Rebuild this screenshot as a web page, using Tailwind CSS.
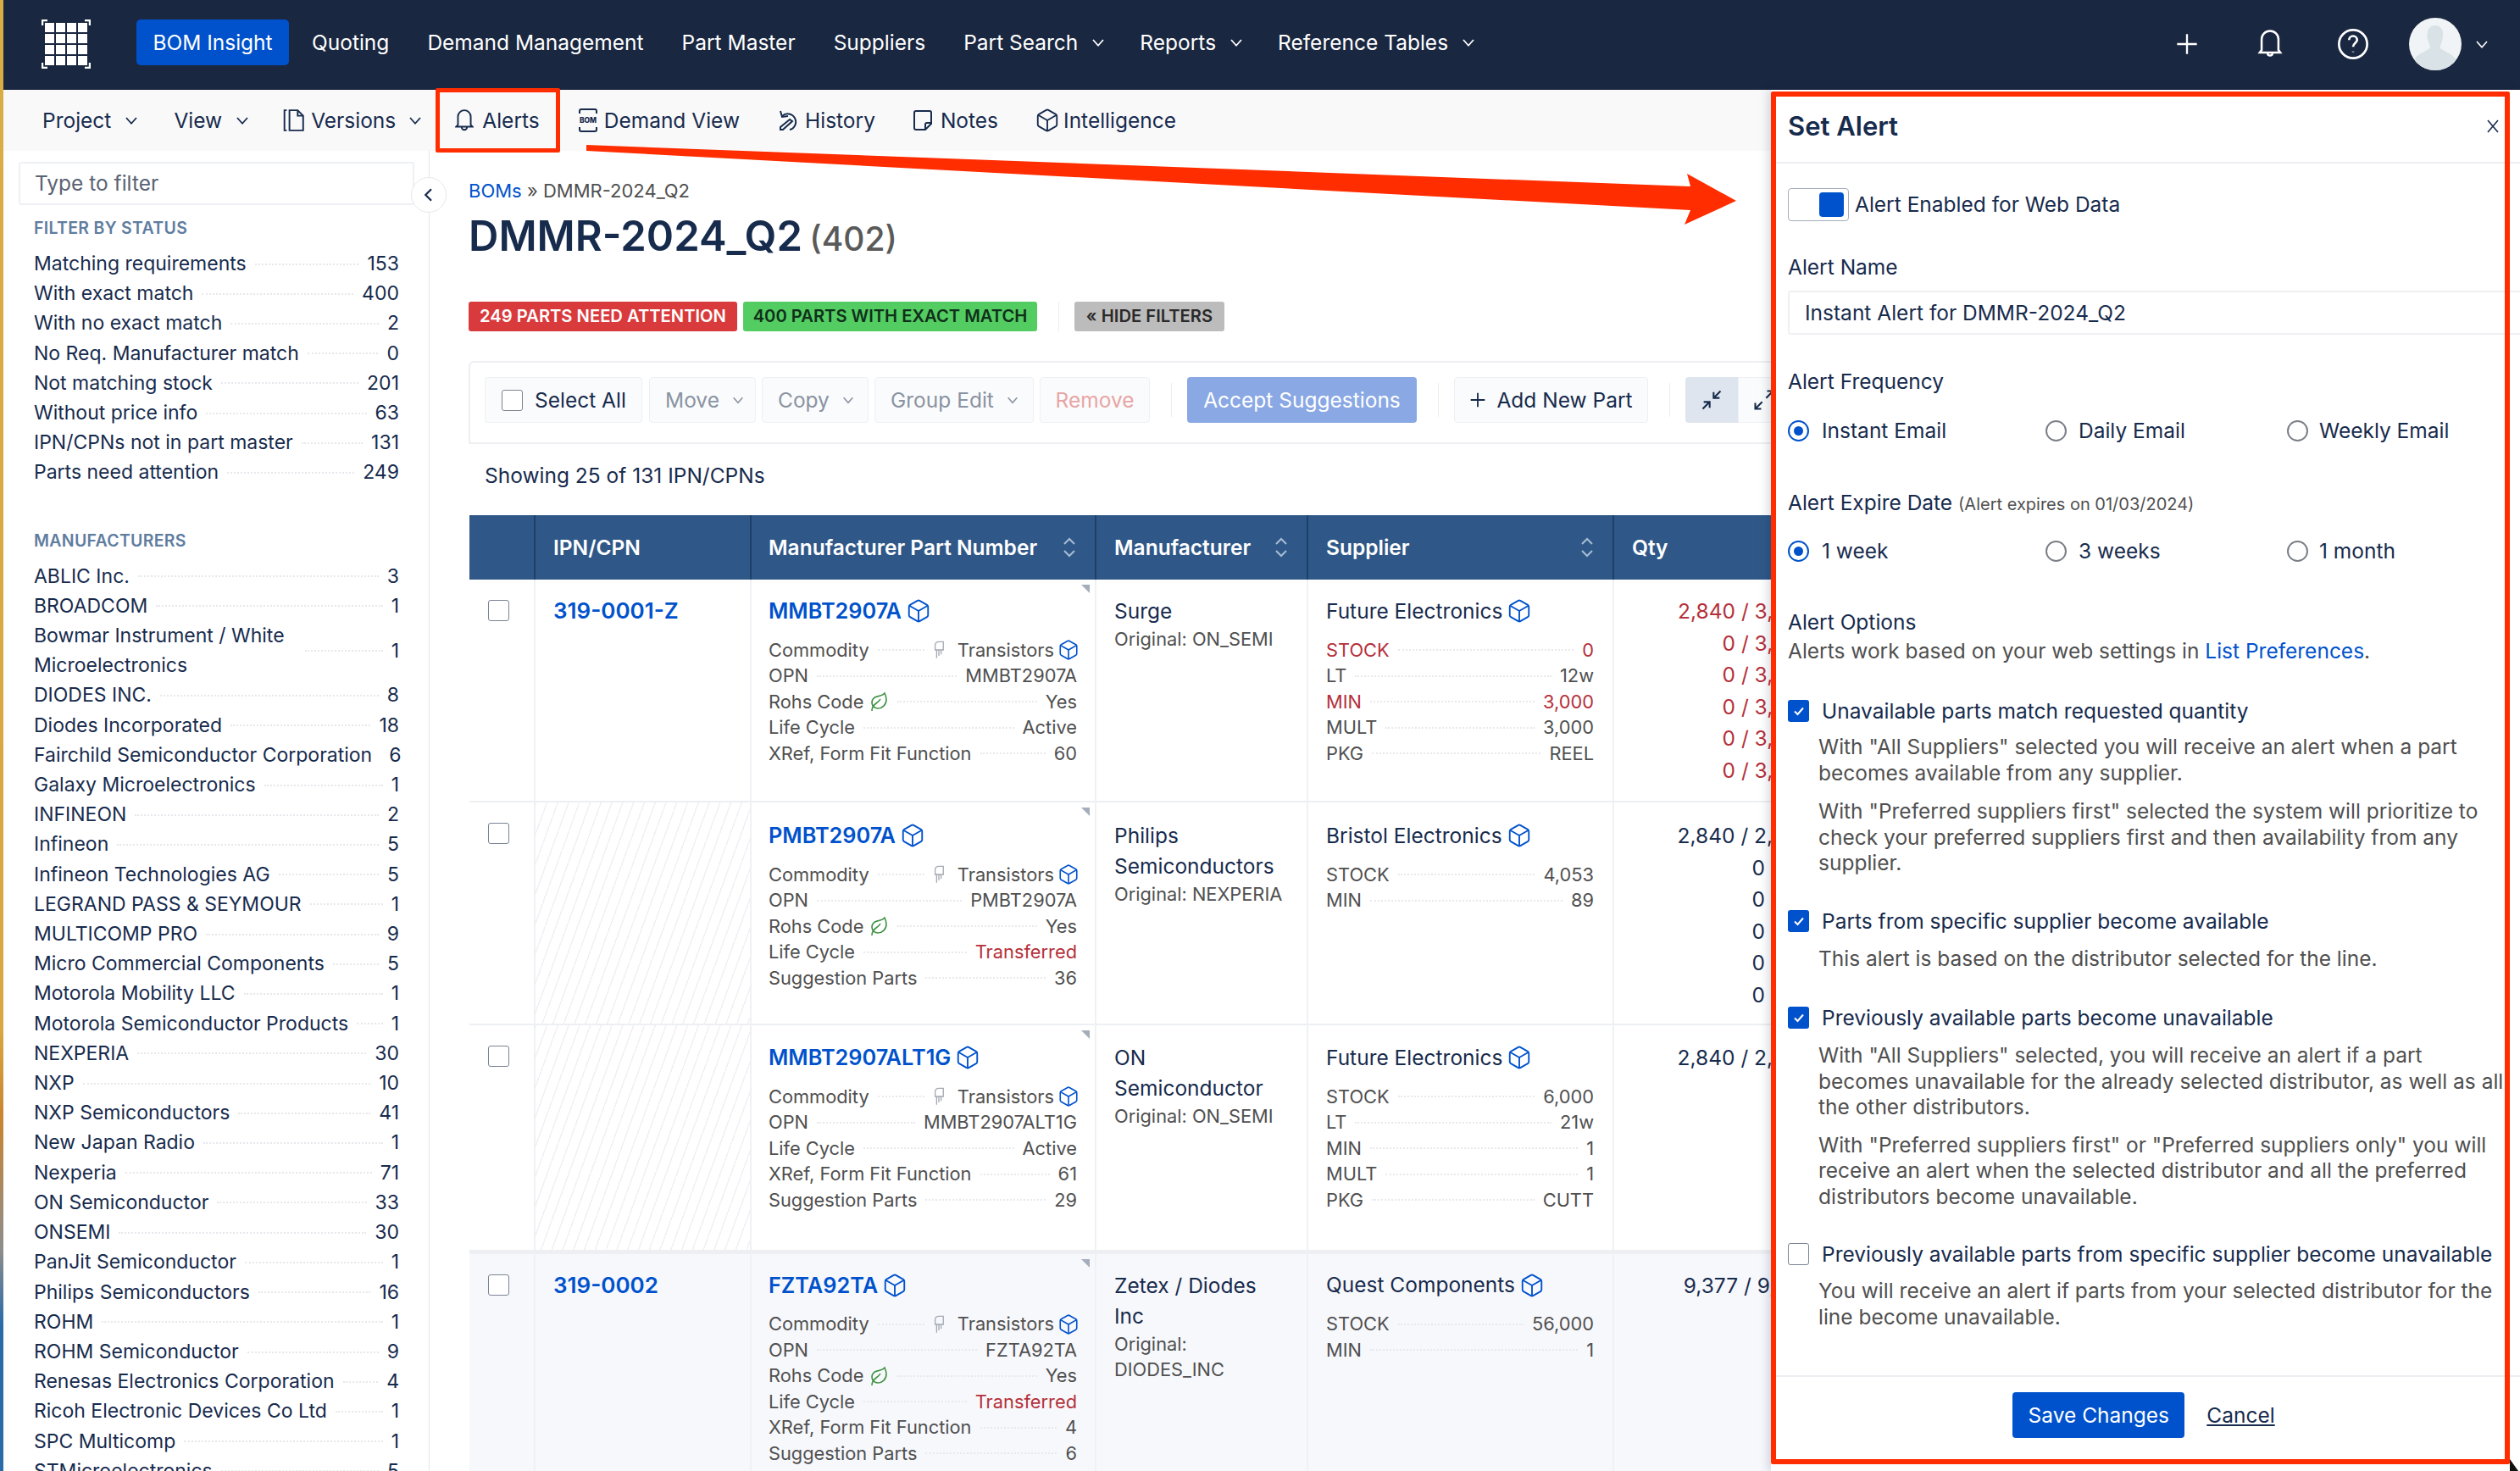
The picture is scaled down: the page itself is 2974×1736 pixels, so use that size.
<!DOCTYPE html>
<html lang="en">
<head>
<meta charset="UTF-8" />
<title>DMMR-2024_Q2 - Set Alert</title>
<script src="https://cdn.jsdelivr.net/npm/@tailwindcss/browser@4"></script>
</head>
<body class="bg-white text-[#172b4d] font-['Inter',sans-serif]">
<div class="relative flex w-[2974px] h-[1736px] overflow-hidden">
  <!-- wallpaper sliver at the window edge -->
  <div class="w-[4px] shrink-0 bg-[linear-gradient(180deg,#d9ad45_0%,#d9a63f_70%,#c98530_76%,#8d8d8d_85%,#2a6ca8_90%,#2a6ca8_100%)]"></div>

  <div class="flex flex-col w-[2970px] min-w-0">
    <!-- Navbar -->
    <nav class="h-[106px] shrink-0 bg-[#1a2740] flex items-center pl-[45px] pr-[36px] pb-[2px] text-white text-[24.500px]">
      <svg class="w-[58px] h-[58px] shrink-0" viewBox="0 0 58 58" fill="#fff">
        <path d="M7 1H1v6M51 1h6v6M7 57H1v-6M51 57h6v-6" fill="none" stroke="#fff" stroke-width="2.400"/>
        <rect x="4" y="4" width="11" height="11"/><rect x="17" y="4" width="11" height="11"/><rect x="30" y="4" width="11" height="11"/><rect x="43" y="4" width="11" height="11"/>
        <rect x="4" y="17" width="11" height="11"/><rect x="17" y="17" width="11" height="11"/><rect x="30" y="17" width="11" height="11"/><rect x="43" y="17" width="11" height="11"/>
        <rect x="4" y="30" width="11" height="11"/><rect x="17" y="30" width="11" height="11"/><rect x="30" y="30" width="11" height="11"/><rect x="43" y="30" width="11" height="11"/>
        <rect x="4" y="43" width="11" height="11"/><rect x="17" y="43" width="11" height="11"/><rect x="30" y="43" width="11" height="11"/><rect x="43" y="43" width="11" height="11"/>
      </svg>
      <ul class="flex items-center gap-[45px] ml-[54px] mb-[4px] whitespace-nowrap">
        <li class="bg-[#0052cc] rounded-[5px] h-[54px] w-[180px] mr-[-18px] flex items-center justify-center">BOM Insight</li>
        <li>Quoting</li>
        <li>Demand Management</li>
        <li>Part Master</li>
        <li>Suppliers</li>
        <li class="flex items-center gap-[15px] mr-[-5px]">Part Search <svg class="w-[18px] h-[18px]" viewBox="0 0 24 24" fill="none" stroke="#fff" stroke-width="2.400"><path d="m4 8 8 9 8-9"/></svg></li>
        <li class="flex items-center gap-[15px] mr-[-5px]">Reports <svg class="w-[18px] h-[18px]" viewBox="0 0 24 24" fill="none" stroke="#fff" stroke-width="2.400"><path d="m4 8 8 9 8-9"/></svg></li>
        <li class="flex items-center gap-[15px]">Reference Tables <svg class="w-[18px] h-[18px]" viewBox="0 0 24 24" fill="none" stroke="#fff" stroke-width="2.400"><path d="m4 8 8 9 8-9"/></svg></li>
      </ul>
      <div class="ml-auto flex items-center">
        <svg class="w-[28px] h-[28px]" viewBox="0 0 24 24" fill="none" stroke="#fff" stroke-width="2"><path d="M12 2v20M2 12h20"/></svg>
        <svg class="w-[34px] h-[38px] ml-[67px]" viewBox="0 0 24 26" fill="none" stroke="#fff" stroke-width="1.800"><path d="M5 18V9a7 7 0 0 1 14 0v9l1.500 2H3.500zM10 20.500a2 2 0 0 0 4 0"/></svg>
        <svg class="w-[38px] h-[38px] ml-[62px]" viewBox="0 0 24 24" fill="none" stroke="#fff" stroke-width="1.700"><circle cx="12" cy="12" r="10.500"/><path d="M9 9a3 3 0 0 1 6 0c0 2-3 2.500-3 5"/><path d="M12 17.500v.5"/></svg>
        <div class="relative w-[62px] h-[62px] ml-[47px] rounded-full bg-[#f1f4f6] overflow-hidden">
          <svg class="w-[62px] h-[62px]" viewBox="0 0 62 62" fill="#d9e2e7"><path d="M31 9c7 0 10 6 9 14-.6 5-3 9-3.500 12 1 3 14 7 18 13 1 2 1 14 1 14H6s0-12 1-14c4-6 17-10 18-13-.5-3-3-7-3.500-12C21 15 24 9 31 9z"/></svg>
        </div>
        <svg class="w-[18px] h-[18px] ml-[15px]" viewBox="0 0 24 24" fill="none" stroke="#fff" stroke-width="2.200"><path d="m4 8 8 9 8-9"/></svg>
      </div>
    </nav>

    <!-- Sub navigation -->
    <div class="h-[72px] shrink-0 bg-[#f9f9fa] flex items-center pl-[46px] text-[24.500px] whitespace-nowrap">
      <span>Project</span>
      <svg class="w-[18px] h-[18px] ml-[15px]" viewBox="0 0 24 24" fill="none" stroke="#172b4d" stroke-width="2.400"><path d="m4 8 8 9 8-9"/></svg>
      <span class="ml-[41px]">View</span>
      <svg class="w-[18px] h-[18px] ml-[15px]" viewBox="0 0 24 24" fill="none" stroke="#172b4d" stroke-width="2.400"><path d="m4 8 8 9 8-9"/></svg>
      <svg class="w-[26px] h-[28px] ml-[39px]" viewBox="0 0 24 26" fill="none" stroke="#172b4d" stroke-width="1.800"><path d="M4 2H1.500v22H4"/><path d="M7 2h9l6 6v16H7zM16 2v6h6"/></svg>
      <span class="ml-[7px]">Versions</span>
      <svg class="w-[18px] h-[18px] ml-[14px]" viewBox="0 0 24 24" fill="none" stroke="#172b4d" stroke-width="2.400"><path d="m4 8 8 9 8-9"/></svg>
      <svg class="w-[22px] h-[28px] ml-[38px]" viewBox="0 0 20 26" fill="none" stroke="#172b4d" stroke-width="1.800"><path d="M3 18V9a7 7 0 0 1 14 0v9l2 2H1zM7 20.500a3 3 0 0 0 6 0"/></svg>
      <span class="ml-[10px]">Alerts</span>
      <svg class="w-[24px] h-[30px] ml-[45px]" viewBox="0 0 24 30" fill="none" stroke="#172b4d" stroke-width="2">
        <path d="M2 7V4a2 2 0 0 1 2-2h16a2 2 0 0 1 2 2v3M2 23v3a2 2 0 0 0 2 2h16a2 2 0 0 0 2-2v-3"/>
        <text x="12" y="18" text-anchor="middle" font-size="8.500" font-weight="800" fill="#172b4d" stroke="none">BOM</text>
      </svg>
      <span class="ml-[7px]">Demand View</span>
      <svg class="w-[24px] h-[26px] ml-[45px]" viewBox="0 0 24 26" fill="none" stroke="#172b4d" stroke-width="2"><path d="M3 2l2 7 7-1"/><path d="M5 8a9.500 9.500 0 1 1 9 16"/><path d="M14 12 3 21v3h3l11-10z"/></svg>
      <span class="ml-[8px]">History</span>
      <svg class="w-[24px] h-[26px] ml-[44px]" viewBox="0 0 24 26" fill="none" stroke="#172b4d" stroke-width="2"><path d="M4 2h16a2 2 0 0 1 2 2v13l-7 7H4a2 2 0 0 1-2-2V4a2 2 0 0 1 2-2z"/><path d="M22 16h-5a2 2 0 0 0-2 2v6"/></svg>
      <span class="ml-[9px]">Notes</span>
      <svg class="w-[30px] h-[30px] ml-[43px]" viewBox="0 0 24 24" fill="none" stroke="#172b4d" stroke-width="1.500"><path d="M21 8a2 2 0 0 0-1-1.730l-7-4a2 2 0 0 0-2 0l-7 4A2 2 0 0 0 3 8v8a2 2 0 0 0 1 1.730l7 4a2 2 0 0 0 2 0l7-4A2 2 0 0 0 21 16Z"/><path d="m3.300 7 8.700 5 8.700-5M12 22V12"/></svg>
      <span class="ml-[4px]">Intelligence</span>
    </div>

    <div class="flex flex-1 min-h-0">
      <!-- Filters -->
      <aside class="relative w-[503px] shrink-0 border-r border-[#e6e8ec] pt-[13px]">
        <div class="ml-[18px] w-[467px] h-[51px] border-2 border-[#eff0f3] rounded-[3px] flex items-center pl-[17px] text-[24.500px] text-[#5a6372]">Type to filter</div>
        <div class="absolute left-[481px] top-[31px] w-[42px] h-[42px] rounded-full bg-white border border-[#e6e8ec] flex items-center justify-center">
          <svg class="w-[18px] h-[18px]" viewBox="0 0 24 24" fill="none" stroke="#172b4d" stroke-width="3"><path d="m16 3-9 9 9 9"/></svg>
        </div>
        <div class="mt-[15px] pl-[36px] text-[19.500px] leading-[24px] font-semibold text-[#5f7d9f] tracking-[0.3px]">FILTER BY STATUS</div>
        <div id="statusList" class="mt-[13px] pl-[36px] pr-[35px]"></div>
        <div class="mt-[50px] pl-[36px] text-[19.500px] leading-[24px] font-semibold text-[#5f7d9f] tracking-[0.3px]">MANUFACTURERS</div>
        <div id="mfrList" class="mt-[13px] pl-[36px] pr-[35px]"></div>
      </aside>

      <!-- BOM content -->
      <main class="flex-1 min-w-0 overflow-hidden pl-[46px] pt-[32px]">
        <div class="text-[22px] leading-[30px] text-[#505050]"><span class="text-[#0052cc]">BOMs</span> » DMMR-2024_Q2</div>
        <h1 class="mt-[10px] text-[49px] leading-[58px] font-semibold text-[#172b4d] whitespace-nowrap">DMMR-2024_Q2 <span class="ml-[-4px] text-[39px] font-medium text-[#5a5a5a]">(402)</span></h1>

        <div class="mt-[45px] h-[35px] flex items-center text-[20.200px] font-semibold whitespace-nowrap">
          <span class="w-[317px] h-[35px] flex items-center justify-center rounded-[3px] bg-[#d93a3c] text-white">249 PARTS NEED ATTENTION</span>
          <span class="ml-[7px] w-[347px] h-[35px] flex items-center justify-center rounded-[3px] bg-[#53cd62] text-[#10301a]">400 PARTS WITH EXACT MATCH</span>
          <span class="ml-[25px] h-[35px] w-px bg-[#eceef1]"></span>
          <span class="ml-[18px] w-[177px] h-[35px] flex items-center justify-center rounded-[3px] bg-[#bcbcbc] text-[#2a2a2a]">« HIDE FILTERS</span>
        </div>

        <!-- Toolbar -->
        <div class="mt-[35px] border-t-2 border-b-2 border-l-2 border-[#edeff2] rounded-tl-[6px] pt-[17px] pb-[23px] pl-[17px] flex items-center text-[24.500px] whitespace-nowrap">
          <div class="w-[186px] h-[54px] bg-[#fafbfc] border border-[#eef0f3] rounded-[4px] flex items-center pl-[19px]">
            <span class="w-[25px] h-[25px] bg-white border border-[#7a8494] rounded-[3px]"></span><span class="ml-[14px]">Select All</span>
          </div>
          <div class="ml-[8px] w-[126px] h-[54px] bg-[#fafbfc] border border-[#eef0f3] rounded-[4px] flex items-center pl-[18px] text-[#8a93a2]">Move<svg class="w-[16px] h-[16px] ml-[14px]" viewBox="0 0 24 24" fill="none" stroke="#8a93a2" stroke-width="2.400"><path d="m4 8 8 9 8-9"/></svg></div>
          <div class="ml-[7px] w-[126px] h-[54px] bg-[#fafbfc] border border-[#eef0f3] rounded-[4px] flex items-center pl-[18px] text-[#8a93a2]">Copy<svg class="w-[16px] h-[16px] ml-[14px]" viewBox="0 0 24 24" fill="none" stroke="#8a93a2" stroke-width="2.400"><path d="m4 8 8 9 8-9"/></svg></div>
          <div class="ml-[7px] w-[188px] h-[54px] bg-[#fafbfc] border border-[#eef0f3] rounded-[4px] flex items-center pl-[18px] text-[#8a93a2]">Group Edit<svg class="w-[16px] h-[16px] ml-[14px]" viewBox="0 0 24 24" fill="none" stroke="#8a93a2" stroke-width="2.400"><path d="m4 8 8 9 8-9"/></svg></div>
          <div class="ml-[7px] w-[130px] h-[54px] bg-[#fafbfc] border border-[#eef0f3] rounded-[4px] flex items-center justify-center text-[#e8a5a5]">Remove</div>
          <span class="ml-[25px] h-[40px] w-px bg-[#eceef1]"></span>
          <div class="ml-[18px] w-[271px] h-[54px] bg-[#8aa8e4] rounded-[4px] flex items-center justify-center text-white">Accept Suggestions</div>
          <span class="ml-[25px] h-[40px] w-px bg-[#eceef1]"></span>
          <div class="ml-[18px] w-[229px] h-[54px] bg-[#fafbfc] border border-[#eef0f3] rounded-[4px] flex items-center justify-center gap-[12px]">
            <svg class="w-[20px] h-[20px]" viewBox="0 0 24 24" fill="none" stroke="#172b4d" stroke-width="2.200"><path d="M12 2v20M2 12h20"/></svg><span>Add New Part</span>
          </div>
          <span class="ml-[25px] h-[40px] w-px bg-[#eceef1]"></span>
          <div class="ml-[18px] w-[62px] h-[54px] bg-[#dfe5ee] rounded-l-[4px] flex items-center justify-center">
            <svg class="w-[28px] h-[28px]" viewBox="0 0 24 24" fill="none" stroke="#172b4d" stroke-width="1.800"><path d="M4 14h6v6M20 10h-6V4M14 10l7-7M3 21l7-7"/></svg>
          </div>
          <div class="w-[62px] h-[54px] bg-[#fafbfc] border border-[#eef0f3] flex items-center justify-center">
            <svg class="w-[28px] h-[28px]" viewBox="0 0 24 24" fill="none" stroke="#172b4d" stroke-width="1.800"><path d="M15 3h6v6M9 21H3v-6M21 3l-7 7M3 21l7-7"/></svg>
          </div>
        </div>

        <div class="mt-[22px] pl-[19px] text-[24.500px] leading-[30px]">Showing 25 of 131 IPN/CPNs</div>

        <!-- Parts table -->
        <table class="mt-[32px] ml-px w-[1650px] table-fixed text-left">
          <colgroup>
            <col class="w-[77px]"><col class="w-[255px]"><col class="w-[407px]"><col class="w-[250px]"><col class="w-[361px]"><col class="w-[300px]">
          </colgroup>
          <thead>
            <tr class="h-[76px] bg-[#2f5888] text-white text-[24.500px]">
              <th class="border-r-2 border-[#1f3f6a]"></th>
              <th class="border-r-2 border-[#1f3f6a] pl-[21px] font-semibold">IPN/CPN</th>
              <th class="border-r-2 border-[#1f3f6a] pl-[20px] pr-[22px] font-semibold"><div class="flex items-center justify-between">Manufacturer Part Number <svg class="w-[16px] h-[24px]" viewBox="0 0 16 24" fill="none" stroke="#a8bcd4" stroke-width="2"><path d="m2 8 6-6 6 6M2 16l6 6 6-6"/></svg></div></th>
              <th class="border-r-2 border-[#1f3f6a] pl-[21px] pr-[22px] font-semibold"><div class="flex items-center justify-between">Manufacturer <svg class="w-[16px] h-[24px]" viewBox="0 0 16 24" fill="none" stroke="#a8bcd4" stroke-width="2"><path d="m2 8 6-6 6 6M2 16l6 6 6-6"/></svg></div></th>
              <th class="border-r-2 border-[#1f3f6a] pl-[21px] pr-[22px] font-semibold"><div class="flex items-center justify-between">Supplier <svg class="w-[16px] h-[24px]" viewBox="0 0 16 24" fill="none" stroke="#a8bcd4" stroke-width="2"><path d="m2 8 6-6 6 6M2 16l6 6 6-6"/></svg></div></th>
              <th class="pl-[21px] font-semibold">Qty</th>
            </tr>
          </thead>
          <tbody id="parts"></tbody>
        </table>
      </main>
    </div>
  </div>

  <!-- Set Alert drawer -->
  <section class="absolute left-[2090px] top-[106px] bottom-0 right-0 bg-white shadow-[-4px_0_10px_rgba(9,30,66,0.15)] flex flex-col text-[24.500px] leading-[30px]">
    <header class="h-[87px] shrink-0 border-b-2 border-[#eceef1] flex items-center justify-between pl-[20px] pr-[24px]">
      <h2 class="text-[31px] font-semibold">Set Alert</h2>
      <svg class="w-[16px] h-[16px]" viewBox="0 0 16 16" fill="none" stroke="#172b4d" stroke-width="1.600"><path d="m2 1 12 14M14 1 2 15"/></svg>
    </header>
    <div class="pl-[20px] pr-[17px]">
      <div class="mt-[29px] flex items-center h-[38px]">
        <span class="relative w-[72px] h-[39px] bg-white border border-[#a5adba] rounded-[4px]">
          <span class="absolute left-[36px] top-[4px] w-[29px] h-[29px] bg-[#0052cc] rounded-[4px]"></span>
        </span>
        <span class="ml-[7px]">Alert Enabled for Web Data</span>
      </div>

      <div class="mt-[40px]">Alert Name</div>
      <div class="mt-[13px] mr-[-30px] h-[52px] border-2 border-[#eff0f3] rounded-[3px] flex items-center pl-[18px]">Instant Alert for DMMR-2024_Q2</div>

      <div class="mt-[40px]">Alert Frequency</div>
      <div class="mt-[28px] grid grid-cols-[304px_285px_1fr]">
        <label class="flex items-center gap-[15px]"><span class="w-[25px] h-[25px] rounded-full border-2 border-[#0052cc] flex items-center justify-center"><span class="w-[11px] h-[11px] rounded-full bg-[#0052cc]"></span></span>Instant Email</label>
        <label class="flex items-center gap-[14px]"><span class="w-[25px] h-[25px] rounded-full border-2 border-[#7a7f87]"></span>Daily Email</label>
        <label class="flex items-center gap-[13px]"><span class="w-[25px] h-[25px] rounded-full border-2 border-[#7a7f87]"></span>Weekly Email</label>
      </div>

      <div class="mt-[55px]">Alert Expire Date <span class="text-[20px] text-[#505050]">(Alert expires on 01/03/2024)</span></div>
      <div class="mt-[25px] grid grid-cols-[304px_285px_1fr]">
        <label class="flex items-center gap-[15px]"><span class="w-[25px] h-[25px] rounded-full border-2 border-[#0052cc] flex items-center justify-center"><span class="w-[11px] h-[11px] rounded-full bg-[#0052cc]"></span></span>1 week</label>
        <label class="flex items-center gap-[14px]"><span class="w-[25px] h-[25px] rounded-full border-2 border-[#7a7f87]"></span>3 weeks</label>
        <label class="flex items-center gap-[13px]"><span class="w-[25px] h-[25px] rounded-full border-2 border-[#7a7f87]"></span>1 month</label>
      </div>

      <div class="mt-[54px]">Alert Options</div>
      <div class="mt-[4px] text-[#505050]">Alerts work based on your web settings in <span class="text-[#0052cc]">List Preferences</span>.</div>

      <div class="mt-[41px] flex items-center gap-[15px]">
        <span class="w-[25px] h-[26px] bg-[#0052cc] rounded-[3px] flex items-center justify-center"><svg class="w-[14px] h-[14px]" viewBox="0 0 14 14" fill="none" stroke="#fff" stroke-width="2"><path d="m2 7.500 3.500 3.500L12 3.500"/></svg></span>
        <span>Unavailable parts match requested quantity</span>
      </div>
      <div class="mt-[12px] ml-[36px] leading-[30.500px] text-[#505050]">
        <p>With "All Suppliers" selected you will receive an alert when a part becomes available from any supplier.</p>
        <p class="mt-[15px]">With "Preferred suppliers first" selected the system will prioritize to check your preferred suppliers first and then availability from any supplier.</p>
      </div>

      <div class="mt-[38px] flex items-center gap-[15px]">
        <span class="w-[25px] h-[26px] bg-[#0052cc] rounded-[3px] flex items-center justify-center"><svg class="w-[14px] h-[14px]" viewBox="0 0 14 14" fill="none" stroke="#fff" stroke-width="2"><path d="m2 7.500 3.500 3.500L12 3.500"/></svg></span>
        <span>Parts from specific supplier become available</span>
      </div>
      <p class="mt-[14px] ml-[36px] leading-[30.500px] text-[#505050]">This alert is based on the distributor selected for the line.</p>

      <div class="mt-[40px] flex items-center gap-[15px]">
        <span class="w-[25px] h-[26px] bg-[#0052cc] rounded-[3px] flex items-center justify-center"><svg class="w-[14px] h-[14px]" viewBox="0 0 14 14" fill="none" stroke="#fff" stroke-width="2"><path d="m2 7.500 3.500 3.500L12 3.500"/></svg></span>
        <span>Previously available parts become unavailable</span>
      </div>
      <div class="mt-[14px] ml-[36px] leading-[30.500px] text-[#505050]">
        <p>With "All Suppliers" selected, you will receive an alert if a part becomes unavailable for the already selected distributor, as well as all the other distributors.</p>
        <p class="mt-[14px]">With "Preferred suppliers first" or "Preferred suppliers only" you will receive an alert when the selected distributor and all the preferred distributors become unavailable.</p>
      </div>

      <div class="mt-[38px] flex items-center gap-[15px]">
        <span class="w-[25px] h-[26px] bg-white border border-[#7a8494] rounded-[3px]"></span>
        <span>Previously available parts from specific supplier become unavailable</span>
      </div>
      <p class="mt-[13px] ml-[36px] leading-[30.500px] text-[#505050]">You will receive an alert if parts from your selected distributor for the line become unavailable.</p>
    </div>
    <footer class="mt-[54px] border-t-2 border-[#eceef1] pt-[18px] flex justify-center items-center gap-[26px] pr-[4px]">
      <span class="w-[203px] h-[54px] bg-[#0052cc] rounded-[4px] text-white flex items-center justify-center">Save Changes</span>
      <span class="underline underline-offset-2">Cancel</span>
    </footer>
  </section>

  <!-- red annotations drawn on the screenshot -->
  <div class="absolute left-[514px] top-[104px] w-[147px] h-[76px] border-[5px] border-[#ff2d00] rounded-[2px]"></div>
  <div class="absolute left-[2090px] top-[108px] w-[872px] h-[1620px] border-[6px] border-[#ff2d00] rounded-[2px]"></div>
  <svg class="absolute left-0 top-0 w-[2974px] h-[1736px] pointer-events-none" viewBox="0 0 2974 1736">
    <polygon points="692,171 1995,220 1991,205 2049,237 1988,265 1995,248 692,178" fill="#ff2d00"/>
    <polygon points="2962,1722 2962,1736 2972,1736" fill="#111"/>
  </svg>
</div>

<script>
  const statusRows = [
    ['Matching requirements', 153], ['With exact match', 400], ['With no exact match', 2],
    ['No Req. Manufacturer match', 0], ['Not matching stock', 201], ['Without price info', 63],
    ['IPN/CPNs not in part master', 131], ['Parts need attention', 249],
  ];
  const mfrRows = [
    ['ABLIC Inc.', 3], ['BROADCOM', 1], ['Bowmar Instrument / White Microelectronics', 1], ['DIODES INC.', 8],
    ['Diodes Incorporated', 18], ['Fairchild Semiconductor Corporation', 6], ['Galaxy Microelectronics', 1],
    ['INFINEON', 2], ['Infineon', 5], ['Infineon Technologies AG', 5], ['LEGRAND PASS & SEYMOUR', 1],
    ['MULTICOMP PRO', 9], ['Micro Commercial Components', 5], ['Motorola Mobility LLC', 1],
    ['Motorola Semiconductor Products', 1], ['NEXPERIA', 30], ['NXP', 10], ['NXP Semiconductors', 41],
    ['New Japan Radio', 1], ['Nexperia', 71], ['ON Semiconductor', 33], ['ONSEMI', 30],
    ['PanJit Semiconductor', 1], ['Philips Semiconductors', 16], ['ROHM', 1], ['ROHM Semiconductor', 9],
    ['Renesas Electronics Corporation', 4], ['Ricoh Electronic Devices Co Ltd', 1], ['SPC Multicomp', 1],
    ['STMicroelectronics', 5],
  ];

  const sideRow = ([name, count]) => `
    <div class="flex items-center text-[23px] leading-[35.200px]">
      <span class="${name.length > 38 ? 'w-[310px]' : 'whitespace-nowrap'}">${name}</span>
      <span class="flex-1 mx-[10px] border-t-2 border-dotted border-[#e6e8ec]"></span>
      <span>${count}</span>
    </div>`;
  document.getElementById('statusList').innerHTML = statusRows.map(sideRow).join('');
  document.getElementById('mfrList').innerHTML = mfrRows.map(sideRow).join('');

  const cube = size => `<svg class="${size === 'lg' ? 'w-[30px] h-[30px]' : 'w-[26px] h-[26px]'} shrink-0" viewBox="0 0 24 24" fill="none" stroke="#0052cc" stroke-width="1.500"><path d="M21 8a2 2 0 0 0-1-1.730l-7-4a2 2 0 0 0-2 0l-7 4A2 2 0 0 0 3 8v8a2 2 0 0 0 1 1.730l7 4a2 2 0 0 0 2 0l7-4A2 2 0 0 0 21 16Z"/><path d="m3.300 7 8.700 5 8.700-5M12 22V12"/></svg>`;
  const leaf = `<svg class="w-[24px] h-[24px] ml-[6px] shrink-0" viewBox="0 0 24 24" fill="none" stroke="#3f9142" stroke-width="1.600"><path d="M11 20A7 7 0 0 1 9.800 6.100C15.500 5 17 4.480 19 2c1 2 2 4.180 2 8 0 5.500-4.780 10-10 10Z"/><path d="M4 23c0-3 2-7 5-9 2-1.500 4-3 5-5"/></svg>`;
  const transistor = `<svg class="w-[14px] h-[22px] mr-[15px] shrink-0" viewBox="0 0 16 24" fill="none" stroke="#a3a9b2" stroke-width="1.500"><path d="M3 12V5a5 5 0 0 1 5-4h6v11zM5 12v11M8 12v8M11 12v6"/></svg>`;

  // one key/value line with a dotted leader; red lines flag a problem
  const kv = ([key, val, flag]) => {
    const keyIcon = key === 'Rohs Code' ? leaf : '';
    const value = key === 'Commodity'
      ? `${transistor}${val}<span class="ml-[4px] mr-[-3px]">${cube()}</span>`
      : val;
    const keyColor = flag === 'all' ? 'text-[#b5303a]' : '';
    const valColor = flag ? 'text-[#b5303a]' : '';
    return `<div class="flex items-center h-[30.500px] text-[21.800px] text-[#505050] whitespace-nowrap">
      <span class="flex items-center ${keyColor}">${key}${keyIcon}</span>
      <span class="flex-1 mx-[10px] border-t-2 border-dotted border-[#e8e9ec]"></span>
      <span class="flex items-center ${valColor}">${value}</span>
    </div>`;
  };

  const parts = [
    {
      h: 'h-[262px]', pad: 'pt-[19px]', ipn: '319-0001-Z', mpn: 'MMBT2907A',
      mpnKv: [['Commodity', 'Transistors'], ['OPN', 'MMBT2907A'], ['Rohs Code', 'Yes'], ['Life Cycle', 'Active'], ['XRef, Form Fit Function', '60']],
      mfr: 'Surge', orig: 'Original: ON_SEMI', sup: 'Future Electronics',
      supKv: [['STOCK', '0', 'all'], ['LT', '12w'], ['MIN', '3,000', 'all'], ['MULT', '3,000'], ['PKG', 'REEL']],
      qty: ['2,840 / 3,000', '0 / 3,000', '0 / 3,000', '0 / 3,000', '0 / 3,000', '0 / 3,000'], qtyRed: true,
    },
    {
      h: 'h-[263px]', pad: 'pt-[21px]', hatch: true, mpn: 'PMBT2907A',
      mpnKv: [['Commodity', 'Transistors'], ['OPN', 'PMBT2907A'], ['Rohs Code', 'Yes'], ['Life Cycle', 'Transferred', 'val'], ['Suggestion Parts', '36']],
      mfr: 'Philips Semiconductors', orig: 'Original: NEXPERIA', sup: 'Bristol Electronics',
      supKv: [['STOCK', '4,053'], ['MIN', '89']],
      qty: ['2,840 / 2,840', '0', '0', '0', '0', '0'],
    },
    {
      h: 'h-[268px]', pad: 'pt-[20px]', hatch: true, thick: true, mpn: 'MMBT2907ALT1G',
      mpnKv: [['Commodity', 'Transistors'], ['OPN', 'MMBT2907ALT1G'], ['Life Cycle', 'Active'], ['XRef, Form Fit Function', '61'], ['Suggestion Parts', '29']],
      mfr: 'ON Semiconductor', orig: 'Original: ON_SEMI', sup: 'Future Electronics',
      supKv: [['STOCK', '6,000'], ['LT', '21w'], ['MIN', '1'], ['MULT', '1'], ['PKG', 'CUTT']],
      qty: ['2,840 / 2,840'],
    },
    {
      h: 'h-[280px]', pad: 'pt-[19px]', alt: true, ipn: '319-0002', mpn: 'FZTA92TA',
      mpnKv: [['Commodity', 'Transistors'], ['OPN', 'FZTA92TA'], ['Rohs Code', 'Yes'], ['Life Cycle', 'Transferred', 'val'], ['XRef, Form Fit Function', '4'], ['Suggestion Parts', '6']],
      mfr: 'Zetex / Diodes Inc', orig: 'Original: DIODES_INC', sup: 'Quest Components',
      supKv: [['STOCK', '56,000'], ['MIN', '1']],
      qty: ['9,377 / 9,377'],
    },
  ];

  document.getElementById('parts').innerHTML = parts.map(p => `
    <tr class="${p.h} ${p.thick ? 'border-b-[5px]' : 'border-b-2'} border-[#edeff2] ${p.alt ? 'bg-[#f7f8fc]' : ''}">
      <td class="align-top border-r-2 border-[#f0f1f4] pl-[22px] pt-[24px]">
        <div class="w-[25px] h-[25px] bg-white border border-[#7a8494] rounded-[3px]"></div>
      </td>
      <td class="align-top border-r-2 border-[#f0f1f4] pl-[21px] ${p.pad} ${p.hatch ? 'bg-[repeating-linear-gradient(110deg,#f1f1f3_0px,#f1f1f3_1.500px,transparent_1.500px,transparent_12px)]' : ''}">
        ${p.ipn ? `<div class="text-[26px] leading-[36px] font-semibold text-[#0052cc]">${p.ipn}</div>` : ''}
      </td>
      <td class="relative align-top border-r-2 border-[#f0f1f4] pl-[20px] pr-[21px] ${p.pad}">
        <svg class="absolute right-[6px] top-[6px] w-[10px] h-[10px]" viewBox="0 0 10 10" fill="#a5adba"><path d="M0 0h10v10z"/></svg>
        <div class="flex items-center gap-[5px] h-[36px] text-[25.300px] font-semibold text-[#0052cc]">${p.mpn}${cube('lg')}</div>
        <div class="mt-[13px]">${p.mpnKv.map(kv).join('')}</div>
      </td>
      <td class="align-top border-r-2 border-[#f0f1f4] pl-[21px] pr-[22px] ${p.pad}">
        <div class="text-[24.500px] leading-[36px]">${p.mfr}</div>
        <div class="text-[21.800px] leading-[30.500px] text-[#505050]">${p.orig}</div>
      </td>
      <td class="align-top border-r-2 border-[#f0f1f4] pl-[21px] pr-[22px] ${p.pad}">
        <div class="flex items-center gap-[5px] h-[36px] text-[24.500px]">${p.sup}${cube('lg')}</div>
        <div class="mt-[13px]">${p.supKv.map(kv).join('')}</div>
      </td>
      <td class="align-top ${p.pad}">
        ${p.qty.map(q => `<div class="text-right whitespace-nowrap text-[24.500px] leading-[37.500px] ${q === '0' ? 'pr-[121px]' : 'pr-[66px]'} ${p.qtyRed ? 'text-[#b5303a]' : ''}">${q}</div>`).join('')}
      </td>
    </tr>`).join('');
</script>
</body>
</html>
